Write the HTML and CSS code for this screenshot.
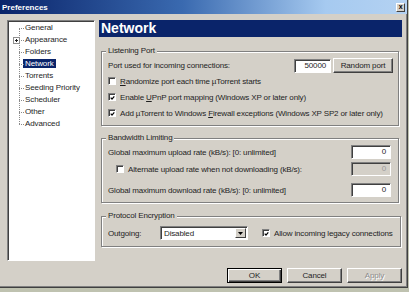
FILE: index.html
```html
<!DOCTYPE html>
<html lang="en">
<head>
  <meta charset="UTF-8">
  <title>Preferences</title>
  <link rel="stylesheet" href="styles.css">
</head>
<body>
  <div class="window">
    <div class="titlebar">
      <span class="title">Preferences</span>
      <span class="close">x</span>
    </div>

    <div class="main">
      <div class="tree">
        <ul class="tree-list">
          <li>General</li>
          <li><span class="plus"></span>Appearance</li>
          <li>Folders</li>
          <li><span class="selected">Network</span></li>
          <li>Torrents</li>
          <li>Seeding Priority</li>
          <li>Scheduler</li>
          <li>Other</li>
          <li>Advanced</li>
        </ul>
      </div>

      <div class="panel">
        <div class="header">Network</div>

        <fieldset class="group port-group">
          <legend>Listening Port</legend>
          <div class="row first">
            <span class="label">Port used for incoming connections:</span>
            <span class="field port">50000</span>
            <span class="btn random">Random port</span>
          </div>
          <div class="row check">
            <span class="box"></span>
            <span><u>R</u>andomize port each time µTorrent starts</span>
          </div>
          <div class="row check">
            <span class="box on"><svg viewBox="0 0 7 7"><polyline points="1,3 2.8,5 6,1.2"/></svg></span>
            <span>Enable <u>U</u>PnP port mapping (Windows XP or later only)</span>
          </div>
          <div class="row check">
            <span class="box on"><svg viewBox="0 0 7 7"><polyline points="1,3 2.8,5 6,1.2"/></svg></span>
            <span>Add µTorrent to Windows <u>F</u>irewall exceptions (Windows XP SP2 or later only)</span>
          </div>
        </fieldset>

        <fieldset class="group bw-group">
          <legend>Bandwidth Limiting</legend>
          <div class="row">
            <span class="label">Global maximum upload rate (kB/s): [0: unlimited]</span>
            <span class="field rate">0</span>
          </div>
          <div class="row check indent">
            <span class="box"></span>
            <span class="label">Alternate upload rate when not downloading (kB/s):</span>
            <span class="field rate disabled">0</span>
          </div>
          <div class="row spaced">
            <span class="label">Global maximum download rate (kB/s): [0: unlimited]</span>
            <span class="field rate">0</span>
          </div>
        </fieldset>

        <fieldset class="group enc-group">
          <legend>Protocol Encryption</legend>
          <div class="row">
            <span class="outgoing">Outgoing:</span>
            <span class="select">
              <span class="select-text">Disabled</span>
              <span class="select-btn"><svg viewBox="0 0 5 3"><polygon points="0,0 5,0 2.5,3"/></svg></span>
            </span>
            <span class="row check legacy">
              <span class="box on"><svg viewBox="0 0 7 7"><polyline points="1,3 2.8,5 6,1.2"/></svg></span>
              <span>Allow incoming legacy connections</span>
            </span>
          </div>
        </fieldset>
      </div>
    </div>

    <div class="buttons">
      <span class="btn dlg default">OK</span>
      <span class="btn dlg">Cancel</span>
      <span class="btn dlg off">Apply</span>
    </div>
  </div>
</body>
</html>
```

FILE: styles.css
```css
body {
  margin: 0;
  background: #bfc2b0;
  font-family: "Liberation Sans", Arial, sans-serif;
  font-size: 8px;
  letter-spacing: -0.15px;
  color: #1e1e1e;
}

.window {
  width: 408px;
  height: 288px;
  box-sizing: border-box;
  background: #d4d0c8;
  border-right: 1px solid #404040;
  border-bottom: 1px solid #404040;
  box-shadow: inset -1px -1px 0 #808080;
  display: flex;
  flex-direction: column;
}

.titlebar {
  height: 14px;
  display: flex;
  align-items: center;
  justify-content: space-between;
  padding: 0 2px;
  background: linear-gradient(to right, #0a246a, #3a6ab0 45%, #a6caf0 80%, #b4d2f2);
}

.title {
  color: #fff;
  font-weight: bold;
  font-size: 8px;
  letter-spacing: 0;
}

.close {
  width: 9px;
  height: 9px;
  margin-top: 1px;
  box-sizing: border-box;
  background: #d4d0c8;
  border: 1px solid;
  border-color: #fff #404040 #404040 #fff;
  font: bold 7px/6px "Liberation Sans", sans-serif;
  text-align: center;
  color: #000;
}

.main {
  display: flex;
  gap: 4px;
  padding: 6px 0 0 7px;
  height: 241px;
}

/* tree */

.tree {
  width: 88px;
  box-sizing: border-box;
  background: #fff;
  border: 1px solid;
  border-color: #808080 #fff #fff #808080;
  box-shadow: inset 1px 1px 0 #404040;
  padding-top: 1px;
}

.tree-list {
  position: relative;
  list-style: none;
  margin: 0;
  padding: 0 0 0 17px;
}

.tree-list::before {
  content: "";
  position: absolute;
  left: 11px;
  top: 6px;
  height: 96px;
  border-left: 1px dotted #8a8a8a;
}

.tree-list li {
  position: relative;
  height: 12px;
  line-height: 12px;
  font-size: 8px;
  letter-spacing: -0.1px;
  white-space: nowrap;
}

.tree-list li::before {
  content: "";
  position: absolute;
  left: -6px;
  top: 6px;
  width: 5px;
  border-top: 1px dotted #8a8a8a;
}

.plus {
  position: absolute;
  left: -12px;
  top: 3px;
  width: 7px;
  height: 7px;
  box-sizing: border-box;
  border: 1px solid #909090;
  background:
    linear-gradient(#222, #222) center / 3px 1px no-repeat,
    linear-gradient(#222, #222) center / 1px 3px no-repeat,
    #fff;
  z-index: 1;
}

.selected {
  display: inline-block;
  background: #0a246a;
  color: #fff;
  line-height: 9px;
  padding: 0 2px;
  margin-left: -2px;
}

/* right panel */

.panel {
  width: 303px;
}

.header {
  height: 17px;
  background: #0a246a;
  color: #fff;
  font-weight: bold;
  font-size: 14px;
  letter-spacing: 0;
  line-height: 17px;
  padding-left: 2px;
}

.group {
  margin: 9px 3px 0 2px;
  padding: 0 7px 4px 6px;
  border: 1px solid #808080;
  box-shadow: inset 1px 1px 0 #fff, 1px 1px 0 #fff;
}

.group legend {
  font-size: 8px;
  line-height: 10px;
  padding: 0 2px;
  margin-left: -2px;
  background: #d4d0c8;
}

.port-group {
  padding-top: 2px;
}

.bw-group {
  margin-top: 7px;
  padding-top: 1px;
}

.enc-group {
  margin-top: 8px;
  padding-top: 4px;
  padding-bottom: 5px;
}

.row {
  display: flex;
  align-items: center;
  height: 16px;
  white-space: nowrap;
}

.row.first {
  height: 15px;
}

.bw-group .row.indent {
  margin-top: 1px;
  padding-left: 8px;
}

.row.spaced {
  margin-top: 5px;
}

.label {
  flex: 1;
}

.check .box {
  margin-right: 4px;
}

.box {
  width: 8px;
  height: 8px;
  box-sizing: border-box;
  background: #fff;
  border: 1px solid;
  border-color: #808080 #fff #fff #808080;
  box-shadow: inset 1px 1px 0 #404040;
  display: inline-flex;
  align-items: center;
  justify-content: center;
}

.box svg {
  width: 6px;
  height: 6px;
  margin: 1px 0 0 1px;
}

.box polyline {
  fill: none;
  stroke: #000;
  stroke-width: 1.7;
}

.field {
  height: 14px;
  box-sizing: border-box;
  background: #fff;
  border: 1px solid;
  border-color: #808080 #fff #fff #808080;
  box-shadow: inset 1px 1px 0 #404040;
  text-align: right;
  line-height: 12px;
  padding-right: 4px;
}

.field.port {
  width: 37px;
}

.field.rate {
  width: 40px;
}

.field.disabled {
  background: #d4d0c8;
  color: #9a9a9a;
}

.btn {
  box-sizing: border-box;
  background: #d4d0c8;
  border: 1px solid;
  border-color: #fff #404040 #404040 #fff;
  box-shadow: inset -1px -1px 0 #808080;
  text-align: center;
}

.btn.random {
  width: 60px;
  height: 15px;
  line-height: 13px;
  margin: 0 -2px 0 2px;
}

.outgoing {
  width: 52px;
}

.select {
  width: 88px;
  height: 14px;
  box-sizing: border-box;
  display: flex;
  background: #fff;
  border: 1px solid;
  border-color: #808080 #fff #fff #808080;
  box-shadow: inset 1px 1px 0 #404040;
  padding: 1px 1px 1px 3px;
}

.select-text {
  flex: 1;
  line-height: 11px;
}

.select-btn {
  width: 11px;
  box-sizing: border-box;
  background: #d4d0c8;
  border: 1px solid;
  border-color: #fff #404040 #404040 #fff;
  display: flex;
  align-items: center;
  justify-content: center;
}

.select-btn svg {
  width: 5px;
  height: 3px;
}

.legacy {
  margin-left: 14px;
}

.legacy .box {
  margin-right: 4px;
}

/* dialog buttons */

.buttons {
  display: flex;
  justify-content: flex-end;
  gap: 5px;
  margin-top: 7px;
  padding-right: 5px;
}

.btn.dlg {
  width: 55px;
  height: 15px;
  line-height: 13px;
}

.btn.default {
  border: 1px solid #000;
  box-shadow: inset 1px 1px 0 #fff, inset -1px -1px 0 #404040, inset -2px -2px 0 #808080;
}

.btn.off {
  color: #8c8c8c;
  text-shadow: 1px 1px 0 #fff;
}
```
